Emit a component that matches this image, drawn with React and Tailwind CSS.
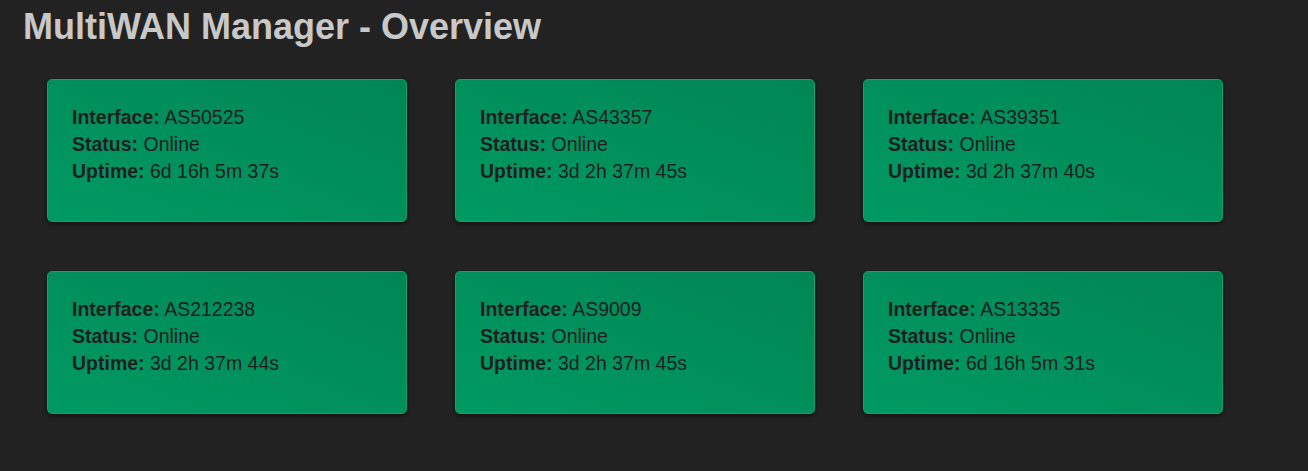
const wans = [
  { name: 'AS50525', status: 'Online', uptime: '6d 16h 5m 37s' },
  { name: 'AS43357', status: 'Online', uptime: '3d 2h 37m 45s' },
  { name: 'AS39351', status: 'Online', uptime: '3d 2h 37m 40s' },
  { name: 'AS212238', status: 'Online', uptime: '3d 2h 37m 44s' },
  { name: 'AS9009', status: 'Online', uptime: '3d 2h 37m 45s' },
  { name: 'AS13335', status: 'Online', uptime: '6d 16h 5m 31s' },
];

function WanCard({ wan }) {
  return (
    <div className="w-[360px] h-[143px] mx-6 mt-6 mb-[25px] rounded-[5px] border border-[#0aa46c] bg-gradient-to-bl from-[#008655] to-[#009a63] shadow-[0_2px_4px_rgba(0,0,0,0.5)] pl-6 pt-6 text-[19.5px] leading-[27px] text-[#1f1f1f]">
      <div><strong>Interface:</strong> {wan.name}</div>
      <div><strong>Status:</strong> {wan.status}</div>
      <div><strong>Uptime:</strong> {wan.uptime}</div>
    </div>
  );
}

export default function App() {
  return (
    <div className="min-h-screen bg-[#222222] px-[23px] pt-[3px] font-[family-name:'Liberation_Sans',Arial,sans-serif]">
      <h1 className="text-[36px] leading-[48px] font-bold text-[#c8c8c8]">MultiWAN Manager - Overview</h1>
      <div className="flex flex-wrap w-[1224px] pt-1">
        {wans.map((w) => (
          <WanCard key={w.name} wan={w} />
        ))}
      </div>
    </div>
  );
}
